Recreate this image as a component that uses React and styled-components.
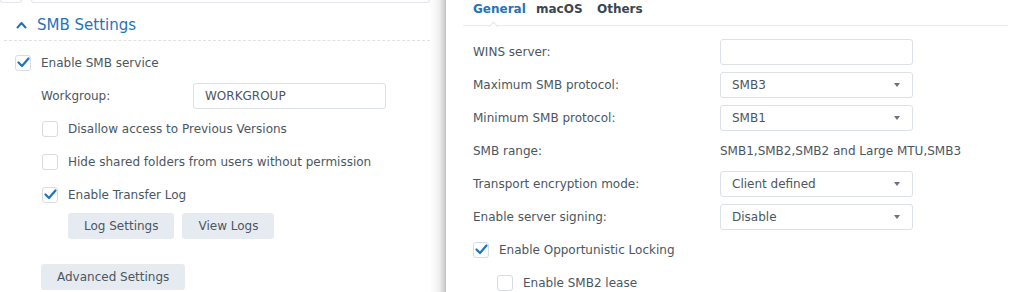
import React from "react";
import styled, { createGlobalStyle } from "styled-components";

// styles

const Global = createGlobalStyle`
  html, body {
    margin: 0;
    padding: 0;
    background: #fff;
  }
  body {
    font-family: "DejaVu Sans", Verdana, sans-serif;
    font-size: 12px;
    color: #4b5661;
  }
`;

const Page = styled.div`
  display: flex;
  width: 1024px;
  height: 292px;
  overflow: hidden;
`;

const LeftPane = styled.div`
  width: 430px;
  flex-shrink: 0;
  display: flex;
  flex-direction: column;
`;

const Shade = styled.div`
  width: 15px;
  flex-shrink: 0;
  background: linear-gradient(to right, rgba(0, 0, 0, 0) 0%, rgba(0, 0, 0, 0.06) 60%, rgba(0, 0, 0, 0.2) 100%);
`;

const RightPane = styled.div`
  flex: 1;
  display: flex;
  flex-direction: column;
  padding: 0 16px 0 17px;
  border-left: 1px solid #bfc3c7;
`;

const TopStrip = styled.div`
  display: flex;
  flex-shrink: 0;
  gap: 9px;
  height: 4px;
`;

const Stub = styled.div`
  width: ${(p) => p.w}px;
  height: 2px;
  border: 1px solid #e3e7eb;
  border-top: none;
  border-radius: 0 0 4px 4px;
`;

const SectionHead = styled.div`
  display: flex;
  flex-shrink: 0;
  align-items: center;
  box-sizing: border-box;
  height: 37px;
  padding: 6px 0 0 12px;
  margin-left: 4px;
  gap: 10px;
  color: #1f74bb;
  font-size: 15px;
  border-bottom: 1px dashed #dde2e7;
`;

const Form = styled.div`
  display: flex;
  flex-direction: column;
  padding-top: 5px;
`;

const Row = styled.div`
  display: flex;
  flex-shrink: 0;
  align-items: center;
  height: 33px;
  padding-left: ${(p) => p.indent || 0}px;
`;

const CheckLabel = styled.label`
  display: flex;
  align-items: center;
  gap: 10px;
  color: #4b5661;
`;

const Box = styled.span`
  width: 16px;
  height: 16px;
  box-sizing: border-box;
  border: 1px solid #d6dce2;
  border-radius: 3px;
  background: #fff;
  display: inline-flex;
  align-items: center;
  justify-content: center;
`;

const FieldLabel = styled.div`
  width: ${(p) => p.w}px;
  color: #4b5661;
`;

const Input = styled.div`
  width: 193px;
  height: 26px;
  box-sizing: border-box;
  border: 1px solid #dce1e6;
  border-radius: 3px;
  display: flex;
  align-items: center;
  justify-content: space-between;
  padding: 0 12px 0 11px;
  color: #4b5661;
`;

const Arrow = styled.span`
  width: 0;
  height: 0;
  border-left: 3.5px solid transparent;
  border-right: 3.5px solid transparent;
  border-top: 4px solid #6a737c;
`;

const ButtonRow = styled.div`
  display: flex;
  flex-shrink: 0;
  gap: 8px;
  padding-left: ${(p) => p.indent || 0}px;
  margin-top: ${(p) => p.top || 0}px;
`;

const Button = styled.div`
  height: 26px;
  padding: 0 16px;
  display: flex;
  align-items: center;
  background: #e6ebf1;
  border-radius: 3px;
  color: #4b5661;
`;

const Tabs = styled.div`
  display: flex;
  flex-shrink: 0;
  box-sizing: border-box;
  height: 26px;
  border-bottom: 1px solid #e8ecef;
  padding-left: 10px;
  margin-bottom: 9px;
`;

const Tab = styled.div`
  position: relative;
  font-weight: bold;
  padding-top: 2px;
  width: ${(p) => (p.w ? `${p.w}px` : "auto")};
  color: ${(p) => (p.active ? "#1f74bb" : "#3b4650")};

  ${(p) =>
    p.active &&
    `
    &::after {
      content: "";
      position: absolute;
      left: 17px;
      bottom: -1px;
      width: 6px;
      height: 6px;
      background: #fff;
      border-left: 1px solid #e0e4e8;
      border-top: 1px solid #e0e4e8;
      transform: translateY(4px) rotate(45deg);
    }
  `}
`;

const Settings = styled.div`
  display: flex;
  flex-direction: column;
  padding-left: 10px;
`;

// icons

const Check = () => (
  <svg width="13" height="11" viewBox="0 0 13 11">
    <path d="M1.5 5.5 L5 9 L11.5 1.5" fill="none" stroke="#1f74bb" strokeWidth="2.2" strokeLinecap="round" strokeLinejoin="round" />
  </svg>
);

const Chevron = () => (
  <svg width="11" height="8" viewBox="0 0 11 8">
    <path d="M1.5 6.5 L5.5 2 L9.5 6.5" fill="none" stroke="#1f74bb" strokeWidth="2" strokeLinecap="round" strokeLinejoin="round" />
  </svg>
);

function CheckBox({ checked, children }) {
  return (
    <CheckLabel>
      <Box>{checked && <Check />}</Box>
      {children}
    </CheckLabel>
  );
}

const fields = [
  { label: "WINS server:", value: "", select: false },
  { label: "Maximum SMB protocol:", value: "SMB3", select: true },
  { label: "Minimum SMB protocol:", value: "SMB1", select: true },
  { label: "SMB range:", text: "SMB1,SMB2,SMB2 and Large MTU,SMB3" },
  { label: "Transport encryption mode:", value: "Client defined", select: true },
  { label: "Enable server signing:", value: "Disable", select: true },
];

export default function App() {
  return (
    <Page>
      <Global />
      <LeftPane>
        <TopStrip>
          <Stub w={20} />
          <Stub w={397} />
        </TopStrip>
        <SectionHead>
          <Chevron />
          SMB Settings
        </SectionHead>
        <Form>
          <Row indent={15}>
            <CheckBox checked>Enable SMB service</CheckBox>
          </Row>
          <Row indent={41}>
            <FieldLabel w={152}>Workgroup:</FieldLabel>
            <Input>WORKGROUP</Input>
          </Row>
          <Row indent={42}>
            <CheckBox>Disallow access to Previous Versions</CheckBox>
          </Row>
          <Row indent={42}>
            <CheckBox>Hide shared folders from users without permission</CheckBox>
          </Row>
          <Row indent={42}>
            <CheckBox checked>Enable Transfer Log</CheckBox>
          </Row>
          <ButtonRow indent={68} top={2}>
            <Button>Log Settings</Button>
            <Button>View Logs</Button>
          </ButtonRow>
          <ButtonRow indent={41} top={25}>
            <Button>Advanced Settings</Button>
          </ButtonRow>
        </Form>
      </LeftPane>
      <Shade />
      <RightPane>
        <Tabs>
          <Tab active w={63}>General</Tab>
          <Tab w={61}>macOS</Tab>
          <Tab>Others</Tab>
        </Tabs>
        <Settings>
          {fields.map((f) => (
            <Row key={f.label}>
              <FieldLabel w={247}>{f.label}</FieldLabel>
              {f.text ? (
                <span>{f.text}</span>
              ) : (
                <Input>
                  {f.value}
                  {f.select && <Arrow />}
                </Input>
              )}
            </Row>
          ))}
          <Row>
            <CheckBox checked>Enable Opportunistic Locking</CheckBox>
          </Row>
          <Row indent={24}>
            <CheckBox>Enable SMB2 lease</CheckBox>
          </Row>
        </Settings>
      </RightPane>
    </Page>
  );
}
